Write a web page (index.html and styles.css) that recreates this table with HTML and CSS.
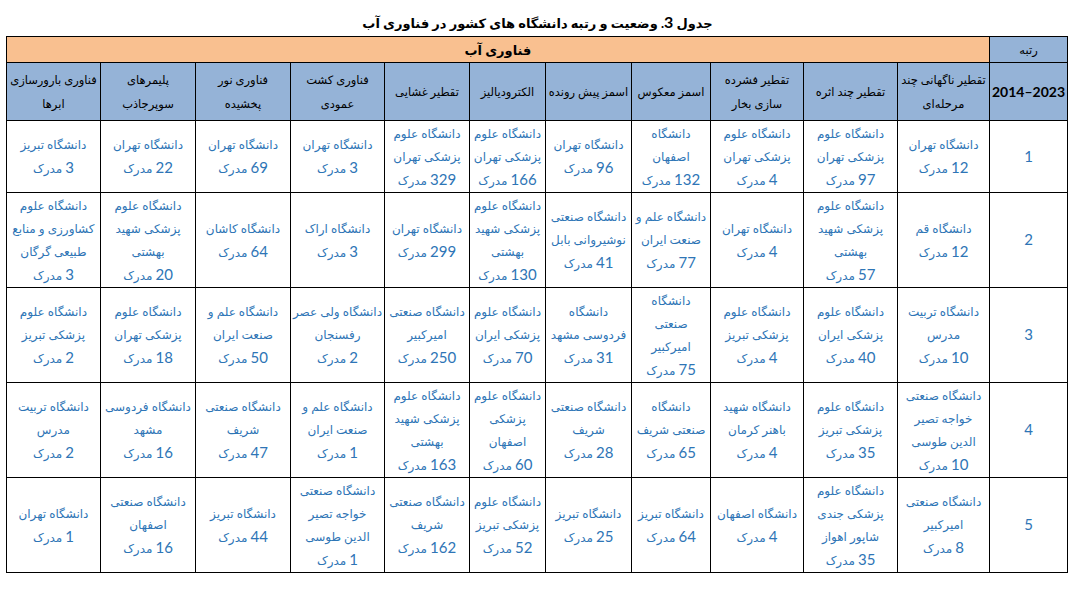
FILE: index.html
```html
<!DOCTYPE html>
<html lang="fa" dir="rtl">
<head>
<meta charset="utf-8">
<title>جدول 3</title>
<link rel="stylesheet" href="styles.css">
</head>
<body>
<div class="page">
  <div class="title">جدول <span class="tn">3</span>. وضعیت و رتبه دانشگاه های کشور در فناوری آب</div>
  <table class="grid">
    <colgroup>
      <col class="w-rank"><col class="w92"><col class="w94"><col class="w93"><col class="w79"><col class="w86"><col class="w76"><col class="w85"><col class="w94"><col class="w95"><col class="w95"><col class="w94">
    </colgroup>
    <thead>
      <tr class="h1">
        <th class="blue">رتبه</th>
        <th class="orange" colspan="11">فناوری آب</th>
      </tr>
      <tr class="h2">
        <th class="blue years"><span dir="ltr">2014–2023</span></th>
        <th class="blue">تقطیر ناگهانی چند<br>مرحله‌ای</th>
        <th class="blue">تقطیر چند اثره</th>
        <th class="blue">تقطیر فشرده<br>سازی بخار</th>
        <th class="blue">اسمز معکوس</th>
        <th class="blue">اسمز پیش رونده</th>
        <th class="blue">الکترودیالیز</th>
        <th class="blue">تقطیر غشایی</th>
        <th class="blue">فناوری کشت<br>عمودی</th>
        <th class="blue">فناوری نور<br>پخشیده</th>
        <th class="blue">پلیمرهای<br>سوپرجاذب</th>
        <th class="blue">فناوری بارورسازی<br>ابرها</th>
      </tr>
    </thead>
    <tbody>
      <tr class="r3">
        <td><span class="n">1</span></td>
        <td>دانشگاه تهران<br><span class="n">12</span> مدرک</td>
        <td>دانشگاه علوم<br>پزشکی تهران<br><span class="n">97</span> مدرک</td>
        <td>دانشگاه علوم<br>پزشکی تهران<br><span class="n">4</span> مدرک</td>
        <td>دانشگاه<br>اصفهان<br><span class="n">132</span> مدرک</td>
        <td>دانشگاه تهران<br><span class="n">96</span> مدرک</td>
        <td>دانشگاه علوم<br>پزشکی تهران<br><span class="n">166</span> مدرک</td>
        <td>دانشگاه علوم<br>پزشکی تهران<br><span class="n">329</span> مدرک</td>
        <td>دانشگاه تهران<br><span class="n">3</span> مدرک</td>
        <td>دانشگاه تهران<br><span class="n">69</span> مدرک</td>
        <td>دانشگاه تهران<br><span class="n">22</span> مدرک</td>
        <td>دانشگاه تبریز<br><span class="n">3</span> مدرک</td>
      </tr>
      <tr class="r4">
        <td><span class="n">2</span></td>
        <td>دانشگاه قم<br><span class="n">12</span> مدرک</td>
        <td>دانشگاه علوم<br>پزشکی شهید<br>بهشتی<br><span class="n">57</span> مدرک</td>
        <td>دانشگاه تهران<br><span class="n">4</span> مدرک</td>
        <td>دانشگاه علم و<br>صنعت ایران<br><span class="n">77</span> مدرک</td>
        <td>دانشگاه صنعتی<br>نوشیروانی بابل<br><span class="n">41</span> مدرک</td>
        <td>دانشگاه علوم<br>پزشکی شهید<br>بهشتی<br><span class="n">130</span> مدرک</td>
        <td>دانشگاه تهران<br><span class="n">299</span> مدرک</td>
        <td>دانشگاه اراک<br><span class="n">3</span> مدرک</td>
        <td>دانشگاه کاشان<br><span class="n">64</span> مدرک</td>
        <td>دانشگاه علوم<br>پزشکی شهید<br>بهشتی<br><span class="n">20</span> مدرک</td>
        <td>دانشگاه علوم<br>کشاورزی و منابع<br>طبیعی گرگان<br><span class="n">3</span> مدرک</td>
      </tr>
      <tr class="r4">
        <td><span class="n">3</span></td>
        <td>دانشگاه تربیت<br>مدرس<br><span class="n">10</span> مدرک</td>
        <td>دانشگاه علوم<br>پزشکی ایران<br><span class="n">40</span> مدرک</td>
        <td>دانشگاه علوم<br>پزشکی تبریز<br><span class="n">4</span> مدرک</td>
        <td>دانشگاه<br>صنعتی<br>امیرکبیر<br><span class="n">75</span> مدرک</td>
        <td>دانشگاه<br>فردوسی مشهد<br><span class="n">31</span> مدرک</td>
        <td>دانشگاه علوم<br>پزشکی ایران<br><span class="n">70</span> مدرک</td>
        <td>دانشگاه صنعتی<br>امیرکبیر<br><span class="n">250</span> مدرک</td>
        <td>دانشگاه ولی عصر<br>رفسنجان<br><span class="n">2</span> مدرک</td>
        <td>دانشگاه علم و<br>صنعت ایران<br><span class="n">50</span> مدرک</td>
        <td>دانشگاه علوم<br>پزشکی تهران<br><span class="n">18</span> مدرک</td>
        <td>دانشگاه علوم<br>پزشکی تبریز<br><span class="n">2</span> مدرک</td>
      </tr>
      <tr class="r4">
        <td><span class="n">4</span></td>
        <td>دانشگاه صنعتی<br>خواجه تصیر<br>الدین طوسی<br><span class="n">10</span> مدرک</td>
        <td>دانشگاه علوم<br>پزشکی تبریز<br><span class="n">35</span> مدرک</td>
        <td>دانشگاه شهید<br>باهنر کرمان<br><span class="n">4</span> مدرک</td>
        <td>دانشگاه<br>صنعتی شریف<br><span class="n">65</span> مدرک</td>
        <td>دانشگاه صنعتی<br>شریف<br><span class="n">28</span> مدرک</td>
        <td>دانشگاه علوم<br>پزشکی<br>اصفهان<br><span class="n">60</span> مدرک</td>
        <td>دانشگاه علوم<br>پزشکی شهید<br>بهشتی<br><span class="n">163</span> مدرک</td>
        <td>دانشگاه علم و<br>صنعت ایران<br><span class="n">1</span> مدرک</td>
        <td>دانشگاه صنعتی<br>شریف<br><span class="n">47</span> مدرک</td>
        <td>دانشگاه فردوسی<br>مشهد<br><span class="n">16</span> مدرک</td>
        <td>دانشگاه تربیت<br>مدرس<br><span class="n">2</span> مدرک</td>
      </tr>
      <tr class="r4">
        <td><span class="n">5</span></td>
        <td>دانشگاه صنعتی<br>امیرکبیر<br><span class="n">8</span> مدرک</td>
        <td>دانشگاه علوم<br>پزشکی جندی<br>شاپور اهواز<br><span class="n">35</span> مدرک</td>
        <td>دانشگاه اصفهان<br><span class="n">4</span> مدرک</td>
        <td>دانشگاه تبریز<br><span class="n">64</span> مدرک</td>
        <td>دانشگاه تبریز<br><span class="n">25</span> مدرک</td>
        <td>دانشگاه علوم<br>پزشکی تبریز<br><span class="n">52</span> مدرک</td>
        <td>دانشگاه صنعتی<br>شریف<br><span class="n">162</span> مدرک</td>
        <td>دانشگاه صنعتی<br>خواجه تصیر<br>الدین طوسی<br><span class="n">1</span> مدرک</td>
        <td>دانشگاه تبریز<br><span class="n">44</span> مدرک</td>
        <td>دانشگاه صنعتی<br>اصفهان<br><span class="n">16</span> مدرک</td>
        <td>دانشگاه تهران<br><span class="n">1</span> مدرک</td>
      </tr>
    </tbody>
  </table>
</div>
</body>
</html>
```
FILE: styles.css
```css
html, body {
  margin: 0;
  padding: 0;
  background: #ffffff;
}
body {
  font-family: Lato, "DejaVu Sans", sans-serif;
}
.page {
  width: 1061px;
  margin-left: 7px;
  margin-right: 14px;
}
.title {
  height: 36px;
  box-sizing: border-box;
  padding-top: 12px;
  line-height: 20px;
  text-align: center;
  font-weight: bold;
  font-size: 13px;
  color: #000;
}
.tn {
  font-size: 16px;
}
.grid {
  width: 1061px;
  border-collapse: collapse;
  table-layout: fixed;
}
.w-rank { width: 78px; }
.w92 { width: 92px; }
.w94 { width: 94px; }
.w93 { width: 93px; }
.w79 { width: 79px; }
.w86 { width: 86px; }
.w76 { width: 76px; }
.w85 { width: 85px; }
.w95 { width: 95px; }
.grid th,
.grid td {
  border: 1px solid #000;
  padding: 0;
  text-align: center;
  vertical-align: middle;
  white-space: nowrap;
  overflow: hidden;
}
.grid th {
  font-weight: normal;
  font-size: 11.5px;
  line-height: 24px;
  color: #000;
}
.blue { background: #95b3d7; }
.orange {
  background: #f9c090;
  font-weight: bold !important;
  font-size: 13px !important;
}
.h1 { height: 26px; }
.h2 { height: 58px; }
.years {
  font-weight: bold !important;
  font-size: 14px !important;
}
.grid td {
  font-size: 12px;
  line-height: 23px;
  color: #2e75b6;
}
.n {
  font-size: 15px;
}
.r3 { height: 72px; }
.r4 { height: 95px; }
```
